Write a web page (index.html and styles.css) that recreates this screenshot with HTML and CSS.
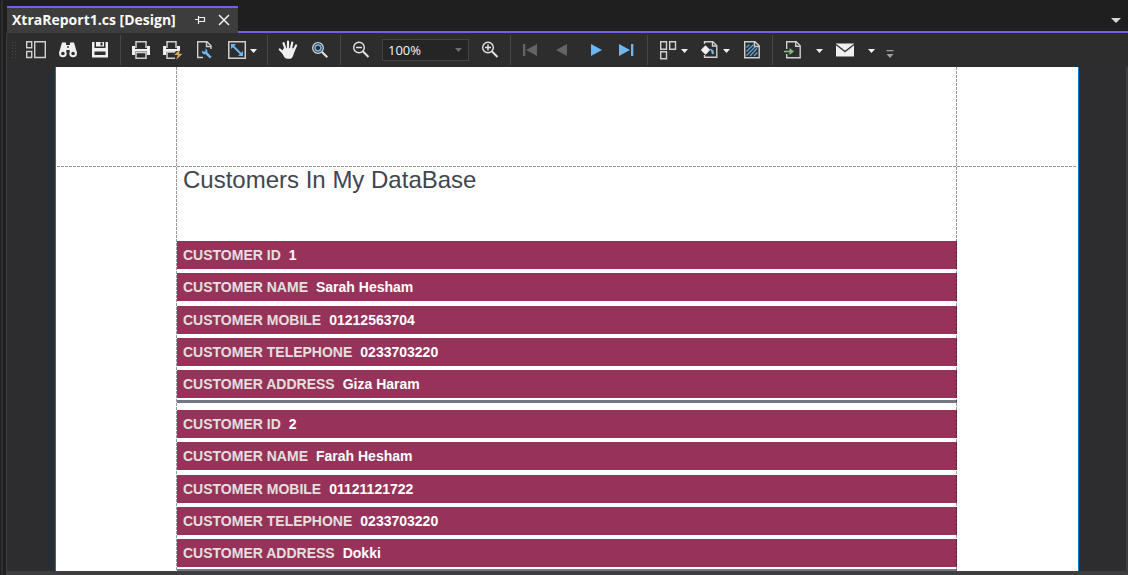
FILE: index.html
```html
<!DOCTYPE html>
<html lang="en">
<head>
<meta charset="utf-8">
<title>XtraReport1.cs [Design]</title>
<link rel="stylesheet" href="styles.css">
</head>
<body>
<div class="window">
  <header class="tabstrip">
    <div class="tab">
      <a class="tab-title" href="#report">XtraReport1.cs [Design]</a>
      <button class="tab-button" aria-label="Pin tab"><svg width="12" height="12" viewBox="0 0 12 12"><path d="M1 5.500h3M4.500 2v8M5 3.500h5.500v4H5M5 7.500h6" fill="none" stroke="#f1f1f1" stroke-width="1.200"/></svg></button>
      <button class="tab-button" aria-label="Close tab"><svg width="12" height="12" viewBox="0 0 12 12"><path d="M1 1l10 10M11 1L1 11" fill="none" stroke="#f1f1f1" stroke-width="1.500"/></svg></button>
    </div>
    <div class="tab-rest">
      <button class="tab-list" aria-label="Open documents"><svg width="10" height="5" viewBox="0 0 10 5"><path d="M0 0h10L5 5z" fill="#d6d6d6"/></svg></button>
    </div>
  </header>

  <div class="frame">
    <nav class="toolbar" aria-label="Report preview">
      <span class="grip"></span>
      <button class="tool" aria-label="Thumbnails"><svg class="icon" viewBox="0 0 20 20"><path d="M.7 1.700h5v6h-5zM.7 11.500h5v6h-5zM8.700 1.700h10.600v15.800H8.700z" fill="none" stroke="#d0d0d0" stroke-width="1.400"/></svg></button>
      <button class="tool" aria-label="Search"><svg class="icon" viewBox="0 0 20 20"><path d="M4 2.500h4V5h4V2.500h4L19 13h-6.500L11.500 10h-3L7.500 13H1z" fill="#f0f0f0"/><circle cx="4.900" cy="13.500" r="2.800" fill="#2d2d2d" stroke="#f0f0f0" stroke-width="2"/><circle cx="15.100" cy="13.500" r="2.800" fill="#2d2d2d" stroke="#f0f0f0" stroke-width="2"/><path d="M9.300 6h1.400v2H9.300z" fill="#2d2d2d"/></svg></button>
      <button class="tool" aria-label="Save"><svg class="icon" viewBox="0 0 20 20"><path d="M2 2h2.500v6h11V2H18v15.500H2z" fill="#f0f0f0"/><path d="M6 2h8v4.500H6z" fill="#f0f0f0"/><path d="M10.500 2.500h2v3h-2zM4.500 11.500h11V15h-11z" fill="#2d2d2d"/></svg></button>
      <span class="separator"></span>
      <button class="tool" aria-label="Print"><svg class="icon" viewBox="0 0 20 20"><path d="M5 8V1.700h10V8" fill="none" stroke="#d0d0d0" stroke-width="1.500"/><path d="M1 6h3v3h12V6h3v9h-3v-3.500H4V15H1z" fill="#f0f0f0"/><path d="M5 12.500h10v5.800H5z" fill="none" stroke="#d0d0d0" stroke-width="1.500"/></svg></button>
      <button class="tool" aria-label="Quick print"><svg class="icon" viewBox="0 0 20 20"><path d="M4 8V1.700h9V8" fill="none" stroke="#d0d0d0" stroke-width="1.500"/><path d="M0 6h3v3h11V6h3v5h-4l-1 1H3v3H0z" fill="#f0f0f0"/><path d="M12 18.300H4v-6.300h8" fill="none" stroke="#d0d0d0" stroke-width="1.500"/><path d="M16.700 9.500l-5.500 5.500h3.600l-1.600 4.800 6.300-6H16z" fill="#dda85c"/></svg></button>
      <button class="tool" aria-label="Page setup"><svg class="icon" viewBox="0 0 20 20"><path d="M8 17.500H2.700V1.700h9.300l4 4V9" fill="none" stroke="#d0d0d0" stroke-width="1.400"/><path d="M11.500 2v4.500H16" fill="none" stroke="#d0d0d0" stroke-width="1.400"/><path d="M8.500 8.200l2 .2v3l-3 0-.3-1.400c-1 2.400.5 4.600 3.400 4.300l4.300 4.200 1.700-1.800-4.200-4.200c.4-3-1.300-4.700-3.900-4.300z" fill="#6cb8f6"/></svg></button>
      <div class="split">
        <button class="split-main" aria-label="Scale"><svg class="icon" viewBox="0 0 20 20"><path d="M1.800 1.700h16.500v16.600H1.800z" fill="none" stroke="#d0d0d0" stroke-width="1.500"/><path d="M5 5l10 10" stroke="#6cb8f6" stroke-width="1.800"/><path d="M4 4h5L4 9zM16 16h-5l5-5z" fill="#6cb8f6"/></svg></button>
        <button class="split-arrow" aria-label="Scale options"><svg class="caret" viewBox="0 0 12 4"><path d="M3 0h7L6.500 4z"/></svg></button>
      </div>
      <span class="separator"></span>
      <button class="tool" aria-label="Hand tool"><svg class="icon" viewBox="0 0 20 20"><path d="M7.500 9L5.500 3.200M10 8.500V1.600M12.900 9l1.300-6.300M15.500 11l2.600-5.600M6.500 14L1.800 9.500" stroke="#f0f0f0" stroke-width="2.200" stroke-linecap="round"/><path d="M5.800 8.300h9.400l2 .7c-.8 3-1.500 5-2.200 7-.8 2-2 2.800-3.800 2.800H9.500c-2 0-3.300-1.400-4.500-4l-1.500-3z" fill="#f0f0f0"/></svg></button>
      <button class="tool" aria-label="Magnifier"><svg class="icon" viewBox="0 0 20 20"><circle cx="8" cy="8" r="5.300" fill="none" stroke="#d8d8d8" stroke-width="1.300"/><circle cx="8" cy="8" r="2.900" fill="none" stroke="#6cb8f6" stroke-width="1.500"/><path d="M12 12l5.300 5.300" stroke="#e4e4e4" stroke-width="2"/></svg></button>
      <span class="separator"></span>
      <button class="tool" aria-label="Zoom out"><svg class="icon" viewBox="0 0 20 20"><circle cx="8" cy="7.500" r="5.300" fill="none" stroke="#e4e4e4" stroke-width="1.400"/><path d="M5 7.500h6" stroke="#e4e4e4" stroke-width="1.500"/><path d="M12 11.500l5.500 5.500" stroke="#e4e4e4" stroke-width="2"/></svg></button>
      <div class="zoom">
        <select class="zoom-select" aria-label="Zoom level"><option>100%</option></select>
        <svg class="zoom-caret" viewBox="0 0 7 4"><path d="M0 0h7L3.500 4z" fill="#6d6d6d"/></svg>
      </div>
      <button class="tool" aria-label="Zoom in"><svg class="icon" viewBox="0 0 20 20"><circle cx="8" cy="7.500" r="5.300" fill="none" stroke="#e4e4e4" stroke-width="1.400"/><path d="M5 7.500h6M8 4.500v6" stroke="#e4e4e4" stroke-width="1.500"/><path d="M12 11.500l5.500 5.500" stroke="#e4e4e4" stroke-width="2"/></svg></button>
      <span class="separator"></span>
      <button class="tool" aria-label="First page" disabled><svg class="icon" viewBox="0 0 20 20"><path d="M2 4h2.300v12H2zM16 4v12L5 10z" fill="#646464"/></svg></button>
      <button class="tool" aria-label="Previous page" disabled><svg class="icon" viewBox="0 0 20 20"><path d="M14 4v12L3 10z" fill="#646464"/></svg></button>
      <button class="tool" aria-label="Next page"><svg class="icon" viewBox="0 0 20 20"><path d="M6 4v12l11-6z" fill="#6cb8f6"/></svg></button>
      <button class="tool" aria-label="Last page"><svg class="icon" viewBox="0 0 20 20"><path d="M2 4v12l11-6zM14 4h2.300v12H14z" fill="#6cb8f6"/></svg></button>
      <span class="separator"></span>
      <div class="split">
        <button class="split-main" aria-label="Multiple pages"><svg class="icon" viewBox="0 0 20 20"><path d="M2.700 1.700h5.800v7.600H2.700zM11.700 1.700h5.800v7.600h-5.800zM2.700 11.700h5.800v7.100H2.700z" fill="none" stroke="#d0d0d0" stroke-width="1.400"/></svg></button>
        <button class="split-arrow" aria-label="Multiple pages options"><svg class="caret" viewBox="0 0 12 4"><path d="M3 0h7L6.500 4z"/></svg></button>
      </div>
      <div class="split">
        <button class="split-main" aria-label="Page color"><svg class="icon" viewBox="0 0 20 20"><path d="M4.500 4V1.700h8.300l4 4v11.600H4.500V15" fill="none" stroke="#d0d0d0" stroke-width="1.400"/><path d="M12.500 2v4h4" fill="none" stroke="#d0d0d0" stroke-width="1.400"/><path d="M5.500 5.300l4.700 4.700-4.700 4.700L.8 10z" fill="#f0f0f0"/><path d="M9.500 8.500c3 .3 4.800 2.200 4.300 5.300-1 1-2 .5-2.200-.5 0-1.700-.7-3-2.100-4.800z" fill="#6cb8f6"/></svg></button>
        <button class="split-arrow" aria-label="Page color options"><svg class="caret" viewBox="0 0 12 4"><path d="M3 0h7L6.500 4z"/></svg></button>
      </div>
      <button class="tool" aria-label="Watermark"><svg class="icon" viewBox="0 0 20 20"><path d="M2.700 1.700H13l4.200 4.200v11.900H2.700z" fill="none" stroke="#d0d0d0" stroke-width="1.400"/><path d="M12.500 2v4.500H17" fill="none" stroke="#d0d0d0" stroke-width="1.400"/><path d="M4.500 7.500l3-3M4.500 11.500l7-7M4.500 15.500l8.500-8.500M8 16l7-7.500M12 16l3.300-3.500" stroke="#5ca6e0" stroke-width="1.300"/></svg></button>
      <span class="separator"></span>
      <button class="tool" aria-label="Export"><svg class="icon" viewBox="0 0 20 20"><path d="M3.700 9V1.700h9.500l4 4v12.100H3.700V14" fill="none" stroke="#d0d0d0" stroke-width="1.400"/><path d="M12.700 2v4.300H17" fill="none" stroke="#d0d0d0" stroke-width="1.400"/><path d="M1 11.500h8" stroke="#7dbd80" stroke-width="1.600"/><path d="M6.500 8l4.500 3.500L6.500 15z" fill="#7dbd80"/></svg></button>
      <button class="arrow" aria-label="Export options"><svg class="caret" viewBox="0 0 12 4"><path d="M3 0h7L6.500 4z"/></svg></button>
      <button class="tool" aria-label="Send by e-mail"><svg class="icon" viewBox="0 0 20 20"><path d="M1 3.500h18v13H1z" fill="#f0f0f0"/><path d="M1 4.500l9 7 9-7" fill="none" stroke="#3a3a3a" stroke-width="1.400"/></svg></button>
      <button class="arrow" aria-label="E-mail options"><svg class="caret" viewBox="0 0 12 4"><path d="M3 0h7L6.500 4z"/></svg></button>
      <button class="overflow" aria-label="More commands"><svg width="8" height="8" viewBox="0 0 8 8"><path d="M.5 0h7v1.200h-7zM.5 4h7L4 8z" fill="#a0a0a0"/></svg></button>
    </nav>

    <main class="workspace">
      <article class="page" id="report">
        <div class="guides"></div>
        <div class="top-margin"></div>
        <div class="band">
          <h1 class="title">Customers In My DataBase</h1>
          <dl class="record">
            <div class="field"><dt>CUSTOMER ID</dt><dd>1</dd></div>
            <div class="field"><dt>CUSTOMER NAME</dt><dd>Sarah Hesham</dd></div>
            <div class="field"><dt>CUSTOMER MOBILE</dt><dd>01212563704</dd></div>
            <div class="field"><dt>CUSTOMER TELEPHONE</dt><dd>0233703220</dd></div>
            <div class="field"><dt>CUSTOMER ADDRESS</dt><dd>Giza Haram</dd></div>
          </dl>
          <hr class="rule">
          <dl class="record">
            <div class="field"><dt>CUSTOMER ID</dt><dd>2</dd></div>
            <div class="field"><dt>CUSTOMER NAME</dt><dd>Farah Hesham</dd></div>
            <div class="field"><dt>CUSTOMER MOBILE</dt><dd>01121121722</dd></div>
            <div class="field"><dt>CUSTOMER TELEPHONE</dt><dd>0233703220</dd></div>
            <div class="field"><dt>CUSTOMER ADDRESS</dt><dd>Dokki</dd></div>
          </dl>
          <hr class="rule">
        </div>
      </article>
    </main>
  </div>
</div>
</body>
</html>
```

FILE: styles.css
```css
* {
  box-sizing: border-box;
}

body {
  margin: 0;
  background: #1f1f1f;
  font-family: "Open Sans", "Noto Sans", sans-serif;
}

button {
  display: flex;
  align-items: center;
  justify-content: center;
  padding: 0;
  border: 0;
  background: none;
}

.window {
  display: flex;
  flex-direction: column;
  height: 100vh;
  padding-left: 6px;
  background: linear-gradient(90deg, #1f1f1f 1px, #2e2e2e 1px, #2e2e2e 3px, #1f1f1f 3px);
  overflow: hidden;
}

/* Document tabs */
.tabstrip {
  display: flex;
  flex: none;
  padding: 6px 0 0 1px;
}

.tab {
  display: flex;
  align-items: center;
  height: 27px;
  padding: 0 8px 2px 5px;
  border-top: 2px solid #7160e8;
  background: #3d3d3d;
}

.tab-title {
  margin-right: 18px;
  color: #fafafa;
  font-size: 14px;
  font-weight: 700;
  line-height: 20px;
  text-decoration: none;
  white-space: nowrap;
}

.tab-button + .tab-button {
  margin-left: 12px;
}

.tab-rest {
  display: flex;
  flex: 1;
  align-items: center;
  justify-content: flex-end;
  padding: 3px 7px 0 0;
  border-bottom: 2px solid #7160e8;
}

/* Toolbar */
.frame {
  display: flex;
  flex: 1;
  flex-direction: column;
  min-height: 0;
  border-left: 1px solid #3d3d3d;
  background: #2d2d30;
}

.toolbar {
  display: flex;
  flex: none;
  align-items: center;
  height: 34px;
  background: #2d2d2e;
}

.grip {
  width: 6px;
  height: 18px;
  margin: 0 3px 0 4px;
  background: radial-gradient(circle, #46464a 1px, transparent 1px) 0 0 / 3px 3px;
}

.tool {
  width: 32px;
  height: 32px;
}

.icon {
  display: block;
  width: 20px;
  height: 20px;
}

.split {
  display: flex;
  height: 32px;
  padding-left: 6px;
}

.split-arrow {
  justify-content: flex-start;
  width: 16px;
}

.arrow {
  width: 20px;
  height: 32px;
}

.caret {
  width: 12px;
  height: 4px;
  margin-top: 2px;
  fill: #f1f1f1;
}

.overflow {
  width: 18px;
  height: 32px;
  padding-top: 8px;
}

.separator {
  width: 1px;
  height: 30px;
  margin: 0 4px;
  background: #47474a;
}

.zoom {
  position: relative;
  width: 87px;
  margin: 0 5px;
}

.zoom-select {
  display: block;
  width: 100%;
  height: 22px;
  padding: 0 5px;
  border: 1px solid #434346;
  border-radius: 0;
  background: #252526;
  color: #f4f4f4;
  font: 13px "Open Sans", sans-serif;
  appearance: none;
}

.zoom-caret {
  position: absolute;
  top: 9px;
  right: 7px;
  width: 7px;
  height: 4px;
  pointer-events: none;
}

/* Report surface */
.workspace {
  display: flex;
  flex: 1;
  min-height: 0;
  padding: 0 47px 0 48px;
  border-right: 2px solid #3e3e40;
  border-bottom: 4px solid #3e3e40;
  overflow: hidden;
}

.page {
  position: relative;
  flex: 1;
  height: max-content;
  min-height: 100%;
  border: solid #007acc;
  border-width: 0 1px;
  background: #fff;
}

.guides {
  position: absolute;
  inset: 0 121px 0 120px;
  background:
    repeating-linear-gradient(#0006 0 3px, #0000 3px 4px) left / 1px 100% no-repeat,
    repeating-linear-gradient(#0006 0 3px, #0000 3px 4px) right / 1px 100% no-repeat;
  pointer-events: none;
}

.top-margin {
  height: 100px;
  margin: 0 1px;
  background: repeating-linear-gradient(90deg, #999 0 3px, #fff 3px 4px) bottom / 100% 1px no-repeat;
}

.band {
  margin: 0 121px;
  font-family: "Liberation Sans", Arial, sans-serif;
}

.title {
  height: 74px;
  margin: 0;
  padding-left: 6px;
  color: #404650;
  font-size: 24px;
  font-weight: 400;
  line-height: 25px;
}

.record {
  display: grid;
  align-content: space-between;
  min-height: 157px;
  margin: 0;
}

.field {
  display: flex;
  gap: 8px;
  padding: 0 6px;
  background: #97335a;
  color: #fff;
  font-size: 14px;
  font-weight: 700;
  line-height: 28px;
}

.field dt {
  color: #e3e0dd;
}

.field dd {
  margin: 0;
}

.rule {
  height: 3px;
  margin: 2px 0 7px;
  border: 0;
  background: #737784;
}
```
